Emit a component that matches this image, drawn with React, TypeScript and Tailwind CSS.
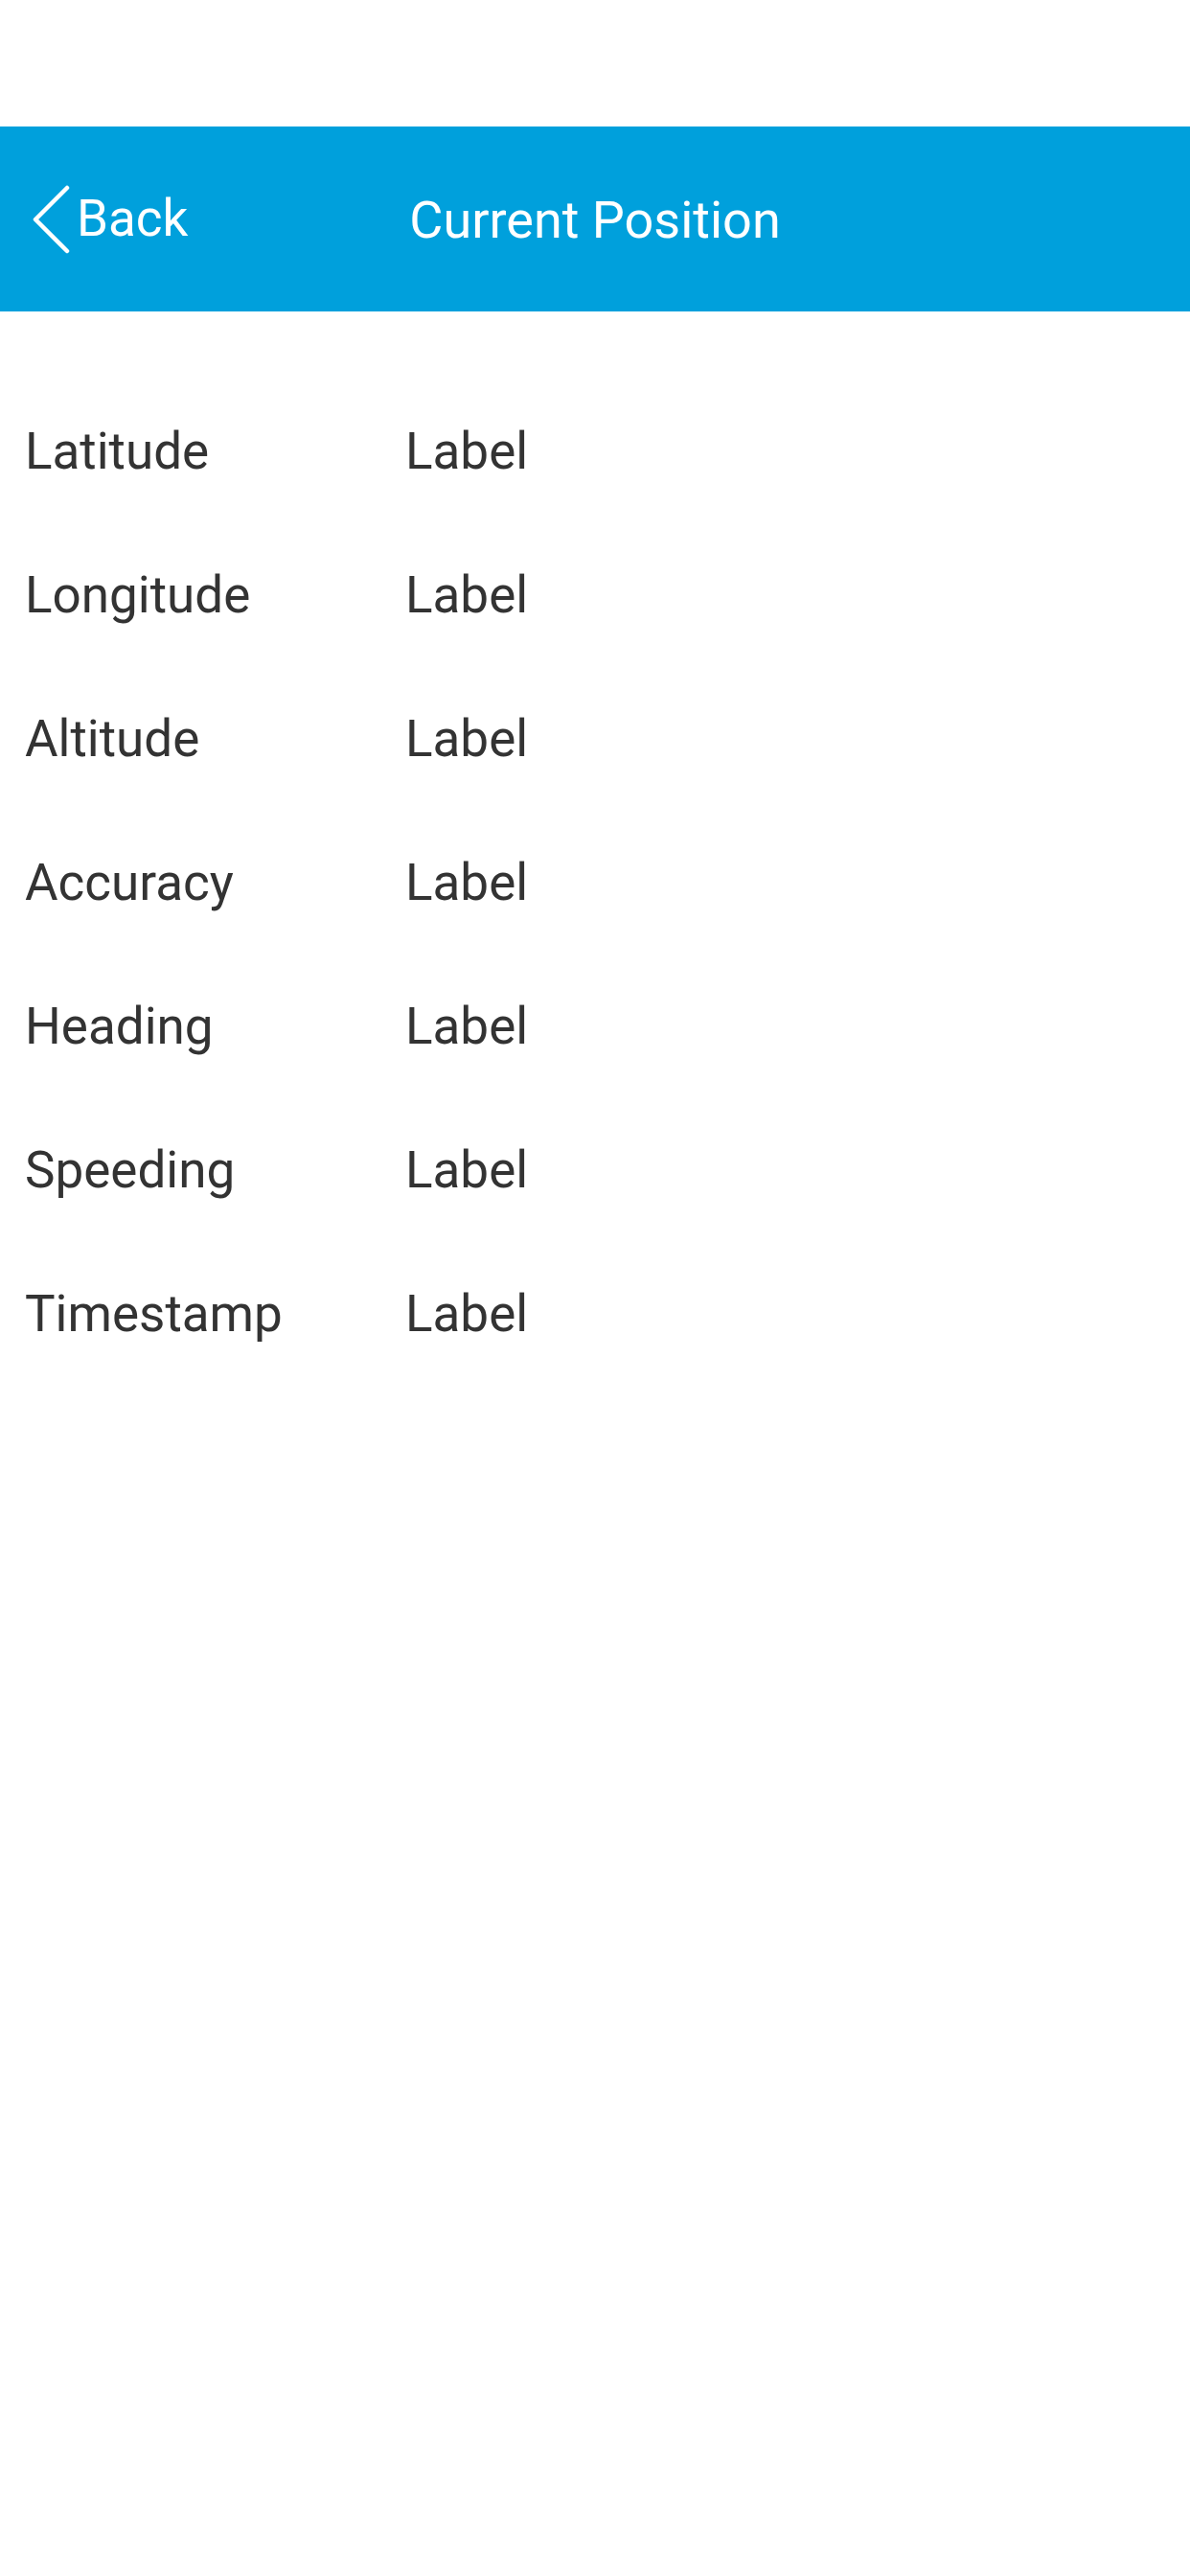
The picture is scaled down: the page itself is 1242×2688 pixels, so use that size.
const rows = [
  "Latitude",
  "Longitude",
  "Altitude",
  "Accuracy",
  "Heading",
  "Speeding",
  "Timestamp",
];

const BackChevron = () => (
  <svg width="42" height="72" viewBox="0 0 42 72" fill="none">
    <path
      d="M38 3 L5 36 L38 69"
      stroke="#ffffff"
      strokeWidth="4.5"
      strokeLinecap="round"
      strokeLinejoin="round"
    />
  </svg>
);

export default function App() {
  return (
    <div
      className="min-h-[2688px] w-full bg-white"
      style={{ fontFamily: "Roboto, 'Noto Sans', sans-serif" }}
    >
      {/* status bar space */}
      <div className="h-[132px]" />

      <header className="grid h-[193px] grid-cols-[1fr_auto_1fr] items-center bg-[#00a0dc] text-white">
        <button className="flex items-center gap-[6px] pl-[32px] text-[53px] leading-none">
          <BackChevron />
          <span>Back</span>
        </button>
        <h1 className="pt-[2px] text-[54px] font-normal leading-none">Current Position</h1>
        <div />
      </header>

      <main className="pt-[72px]">
        {rows.map((name, index: any) => (
          <div key={index} className="flex h-[150px] items-center pl-[26px] text-[53px] text-[#333333]">
            <span className="w-[397px]">{name}</span>
            <span>Label</span>
          </div>
        ))}
      </main>
    </div>
  );
}
